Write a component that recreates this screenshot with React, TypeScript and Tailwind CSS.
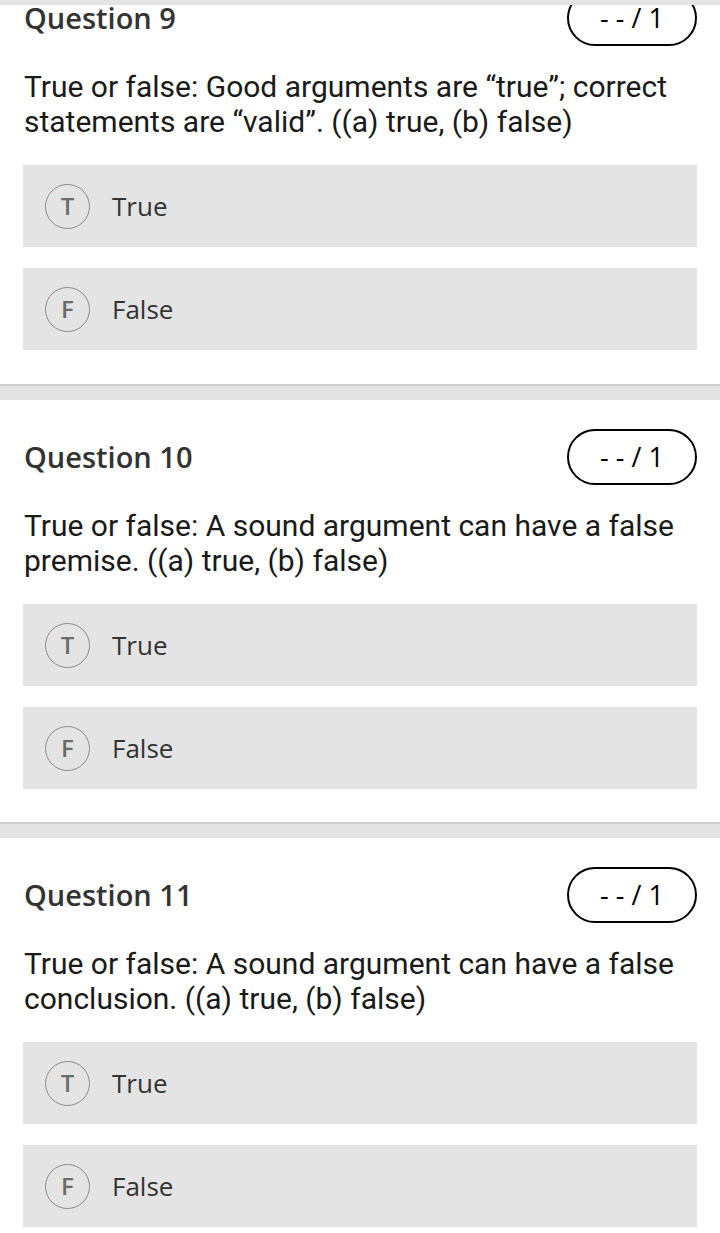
const questions = [
  {
    n: 9,
    text: 'True or false: Good arguments are “true”; correct statements are “valid”. ((a) true, (b) false)',
  },
  {
    n: 10,
    text: 'True or false: A sound argument can have a false premise. ((a) true, (b) false)',
  },
  {
    n: 11,
    text: 'True or false: A sound argument can have a false conclusion. ((a) true, (b) false)',
  },
];

function Option({ letter, label }: { letter: string; label: string }) {
  return (
    <div className="flex h-[82px] items-center bg-[#e4e4e4] pl-[22px]">
      <div className="flex h-[45px] w-[45px] items-center justify-center rounded-full border border-[#8a8a8a] text-[24px] font-semibold text-[#6b6b6b] font-['Open_Sans',sans-serif]">
        {letter}
      </div>
      <span className="ml-[22px] text-[26px] text-[#333] font-['Open_Sans',sans-serif]">{label}</span>
    </div>
  );
}

function Separator() {
  return (
    <div className="h-[16px] border-t-2 border-[#cdcdcd] bg-[#e4e4e4]" />
  );
}

function Question({ n, text, first }: { n: number; text: string; first?: boolean }) {
  return (
    <section className={first ? 'px-[23px] pb-[34px]' : 'px-[23px] pb-[33px] pt-[39px]'}>
      <div className="flex h-[36px] items-center justify-between">
        <h2 className="pl-px text-[29px] leading-[36px] font-semibold text-[#333] font-['Open_Sans',sans-serif]">
          Question {n}
        </h2>
        <div className="-my-[10px] flex h-[56px] w-[130px] items-center justify-center rounded-full border-2 border-black text-[27px] text-black font-['Open_Sans',sans-serif]">
          - - / 1
        </div>
      </div>
      <p className="mt-[33px] pl-px text-[30px] leading-[35px] text-[#1a1a1a] font-['Roboto',sans-serif]">
        {text}
      </p>
      <div className="mt-[26px] flex flex-col gap-[21px]">
        <Option letter="T" label="True" />
        <Option letter="F" label="False" />
      </div>
    </section>
  );
}

export default function App() {
  return (
    <div className="relative h-[1233px] overflow-hidden bg-white">
      <div className="absolute inset-x-0 top-0 h-[5px] bg-[#e4e4e4]" />
      {questions.map((q, i) => (
        <div key={q.n}>
          {i > 0 && <Separator />}
          <Question n={q.n} text={q.text} first={i === 0} />
        </div>
      ))}
    </div>
  );
}
